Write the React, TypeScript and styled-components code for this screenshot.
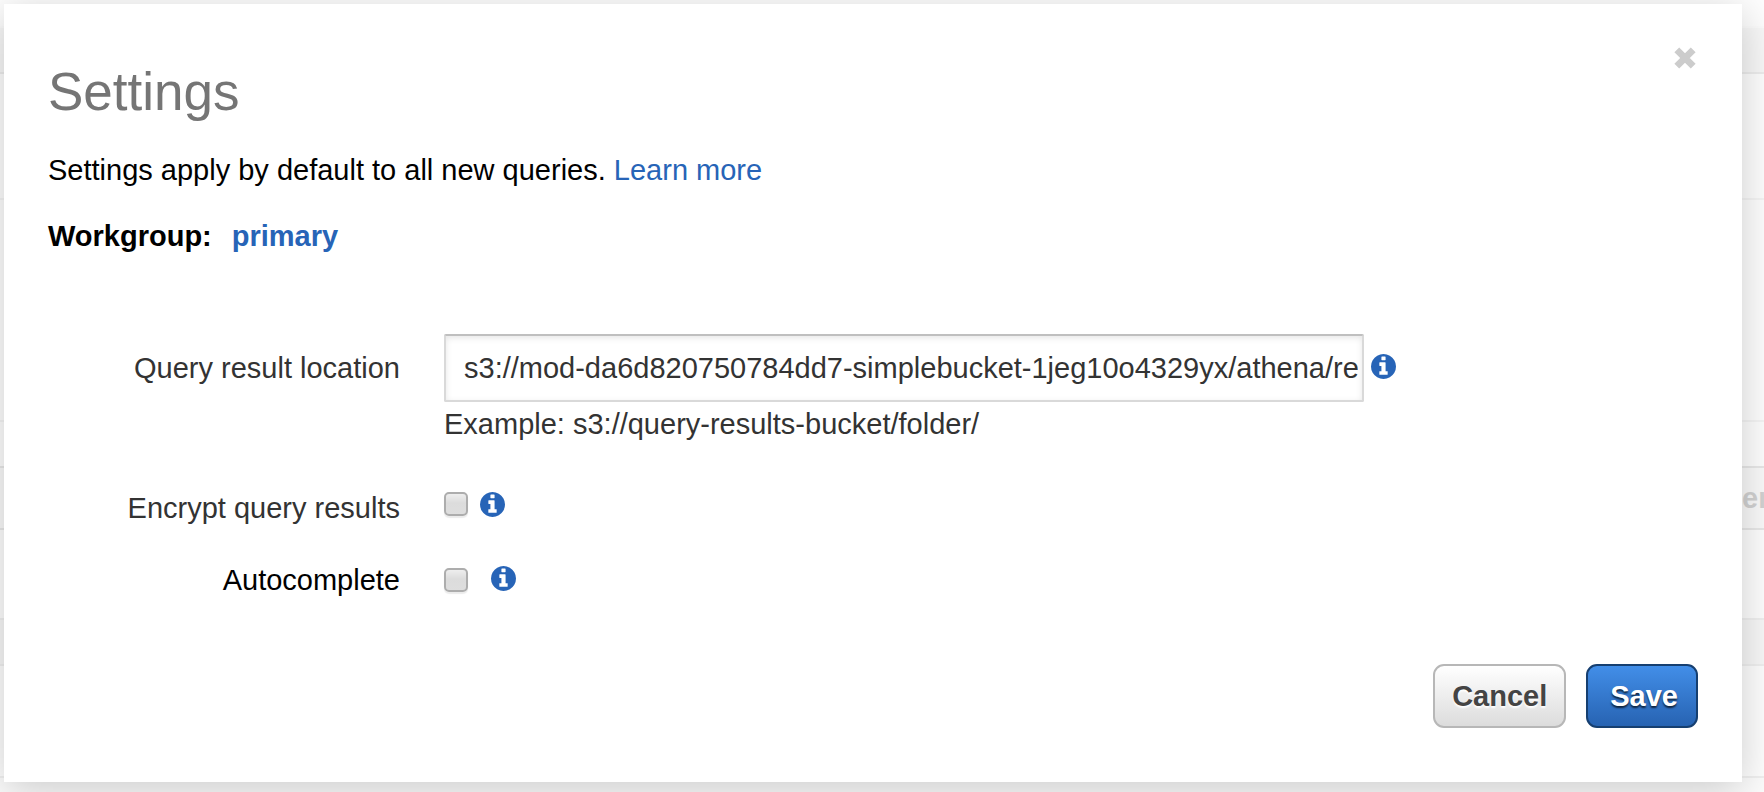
import React from 'react';
import styled, { createGlobalStyle } from 'styled-components';

const GlobalStyle = createGlobalStyle`
  *, *::before, *::after { box-sizing: border-box; }
  body {
    margin: 0;
    background: #fcfcfc;
    color: #000;
    font-family: "Liberation Sans", Arial, Helvetica, sans-serif;
    font-size: 29px;
    line-height: 32px;
    overflow: hidden;
  }
`;

const Screen = styled.div`
  display: grid;
  grid-template-columns: minmax(0, 1fr);
  min-height: 100vh;
  overflow: hidden;
`;

const Backdrop = styled.div`
  grid-area: 1 / 1;
  display: flex;
  flex-direction: column;
`;

const Band = styled.div<{ $height: number; $shade?: string; $line?: string }>`
  display: flex;
  align-items: center;
  justify-content: flex-end;
  height: ${p => p.$height}px;
  background: ${p => p.$shade ?? '#fefefe'};
  border-bottom: 2px solid ${p => p.$line ?? '#f5f5f5'};
`;

const FadedLabel = styled.span`
  width: 22px;
  overflow: hidden;
  color: #d2d2d2;
  font-weight: bold;
`;

const Dialog = styled.main`
  grid-area: 1 / 1;
  align-self: start;
  position: relative;
  margin: 4px 22px 10px 4px;
  padding: 40px 44px 54px;
  background: #fff;
  box-shadow: 0 8px 40px rgba(0, 0, 0, 0.2);
`;

const Header = styled.header`
  display: flex;
  align-items: flex-start;
  justify-content: space-between;
`;

const Title = styled.h1`
  margin: 18px 0 0;
  color: #757575;
  font-size: 53px;
  font-weight: normal;
  line-height: 60px;
`;

const CloseButton = styled.button`
  display: flex;
  padding: 3px 2px;
  border: 0;
  background: none;
  color: #ccc;
`;

const Link = styled.a`
  color: #2764b7;
  text-decoration: none;
`;

const Intro = styled.p`
  margin: 32px 0 0;
`;

const Workgroup = styled.p`
  display: flex;
  gap: 20px;
  margin: 34px 0 0;
  font-weight: bold;
`;

const Form = styled.form`
  margin-top: 82px;
`;

const Row = styled.div<{ $top?: number; $align?: string }>`
  display: grid;
  grid-template-columns: 352px minmax(0, 1fr);
  column-gap: 44px;
  align-items: ${p => p.$align ?? 'center'};
  margin-top: ${p => p.$top ?? 0}px;
`;

const Label = styled.label<{ $strong?: boolean }>`
  color: ${p => (p.$strong ? '#000' : '#333')};
  text-align: right;
`;

const Field = styled.div<{ $gap?: number; $align?: string }>`
  display: flex;
  align-items: ${p => p.$align ?? 'center'};
  gap: ${p => p.$gap ?? 7}px;
`;

const TextInput = styled.input`
  flex: 0 1 920px;
  min-width: 0;
  height: 68px;
  padding: 0 4px 0 18px;
  border: 2px solid #d9d9d9;
  border-top-color: #bfbfbf;
  border-radius: 2px;
  outline: 0;
  background: #fff;
  box-shadow: inset 0 2px 6px rgba(0, 0, 0, 0.1);
  color: #333;
  font: inherit;
`;

const Hint = styled.div`
  grid-column: 2;
  margin-top: 6px;
  color: #333;
`;

const Checkbox = styled.input`
  appearance: none;
  width: 24px;
  height: 24px;
  margin: 0;
  border: 2px solid #adadad;
  border-radius: 5px;
  background: linear-gradient(#eee, #dcdcdc 45%, #dedede);
  box-shadow: 0 2px 1px rgba(0, 0, 0, 0.08);
`;

const InfoSvg = styled.svg`
  flex: none;
  width: 25px;
  height: 25px;
  margin-bottom: 4px;
  fill: #2764b7;
`;

const Actions = styled.div`
  display: flex;
  justify-content: flex-end;
  gap: 20px;
  margin-top: 68px;
`;

const Button = styled.button<{ $primary?: boolean }>`
  height: 64px;
  padding: ${p => (p.$primary ? '0 18px 0 22px' : '0 17px')};
  border: 2px solid ${p => (p.$primary ? '#163f70' : '#b7b7b7')};
  border-radius: 11px;
  background: ${p => (p.$primary ? 'linear-gradient(#428ee8, #2763b2)' : 'linear-gradient(#fff, #dcdcdc)')};
  color: ${p => (p.$primary ? '#fff' : '#444')};
  font: inherit;
  font-weight: bold;
  text-shadow: ${p => (p.$primary ? '0 2px 2px rgba(0, 0, 0, 0.7)' : '0 2px 2px #fff')};
`;

const InfoIcon = () => (
  <InfoSvg viewBox="0 0 1536 1536" role="img" aria-label="More information">
    <path d="M1024 1248v-160q0-14-9-23t-23-9h-96v-512q0-14-9-23t-23-9h-320q-14 0-23 9t-9 23v160q0 14 9 23t23 9h96v320h-96q-14 0-23 9t-9 23v160q0 14 9 23t23 9h448q14 0 23-9t9-23zm-128-896v-160q0-14-9-23t-23-9h-192q-14 0-23 9t-9 23v160q0 14 9 23t23 9h192q14 0 23-9t9-23zm640 416q0 209-103 385.5t-279.5 279.5-385.5 103-385.5-103-279.5-279.5-103-385.5 103-385.5 279.5-279.5 385.5-103 385.5 103 279.5 279.5 103 385.5z" />
  </InfoSvg>
);

export default function App() {
  return (
    <Screen>
      <GlobalStyle />
      <Backdrop aria-hidden="true">
        <Band $height={28} $line="#fcfcfc" />
        <Band $height={46} $shade="#f8f8f8" $line="#ededed" />
        <Band $height={126} />
        <Band $height={222} />
        <Band $height={46} $line="#e8e8e8" />
        <Band $height={62} $shade="#fafafa" $line="#e8e8e8">
          <FadedLabel>er</FadedLabel>
        </Band>
        <Band $height={90} $line="#f0f0f0" />
        <Band $height={46} $shade="#f8f8f8" $line="#f0f0f0" />
        <Band $height={112} $line="#f0f0f0" />
      </Backdrop>
      <Dialog role="dialog" aria-labelledby="settings-title">
        <Header>
          <Title id="settings-title">Settings</Title>
          <CloseButton type="button" aria-label="Close">
            <svg width="22" height="22" viewBox="0 0 22 22" stroke="currentColor" strokeWidth="6.8">
              <path d="M2.8 2.8 19.2 19.2M19.2 2.8 2.8 19.2" />
            </svg>
          </CloseButton>
        </Header>
        <Intro>
          Settings apply by default to all new queries. <Link href="#learn-more">Learn more</Link>
        </Intro>
        <Workgroup>
          <span>Workgroup:</span>
          <Link href="#primary">primary</Link>
        </Workgroup>
        <Form>
          <Row>
            <Label htmlFor="location">Query result location</Label>
            <Field>
              <TextInput
                id="location"
                type="text"
                defaultValue="s3://mod-da6d820750784dd7-simplebucket-1jeg10o4329yx/athena/re"
              />
              <InfoIcon />
            </Field>
            <Hint>Example: s3://query-results-bucket/folder/</Hint>
          </Row>
          <Row $top={52} $align="start">
            <Label htmlFor="encrypt">Encrypt query results</Label>
            <Field $gap={12} $align="flex-start">
              <Checkbox id="encrypt" type="checkbox" />
              <InfoIcon />
            </Field>
          </Row>
          <Row $top={40}>
            <Label htmlFor="autocomplete" $strong>Autocomplete</Label>
            <Field $gap={23}>
              <Checkbox id="autocomplete" type="checkbox" />
              <InfoIcon />
            </Field>
          </Row>
          <Actions>
            <Button type="button">Cancel</Button>
            <Button type="submit" $primary>Save</Button>
          </Actions>
        </Form>
      </Dialog>
    </Screen>
  );
}
